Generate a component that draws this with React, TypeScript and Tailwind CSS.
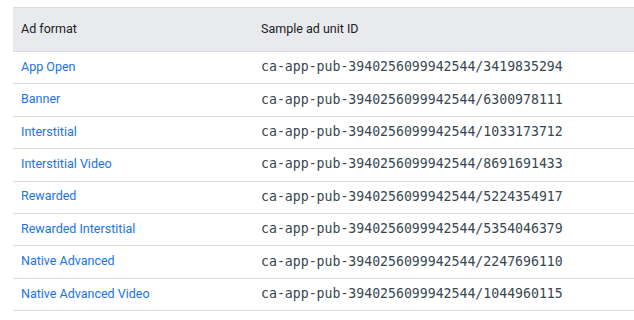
const rows: [string, string][] = [
  ['App Open', 'ca-app-pub-3940256099942544/3419835294'],
  ['Banner', 'ca-app-pub-3940256099942544/6300978111'],
  ['Interstitial', 'ca-app-pub-3940256099942544/1033173712'],
  ['Interstitial Video', 'ca-app-pub-3940256099942544/8691691433'],
  ['Rewarded', 'ca-app-pub-3940256099942544/5224354917'],
  ['Rewarded Interstitial', 'ca-app-pub-3940256099942544/5354046379'],
  ['Native Advanced', 'ca-app-pub-3940256099942544/2247696110'],
  ['Native Advanced Video', 'ca-app-pub-3940256099942544/1044960115'],
];

export default function App() {
  return (
    <div className="w-[634px] h-[320px] overflow-hidden bg-white pt-[7px] pl-[13px] font-['Roboto',sans-serif]">
      <div className="w-[640px] border-t border-[#dadce0]">
        {/* header */}
        <div className="flex h-[44px] items-center bg-[#e8eaed] border-b border-[#dadce0] text-[12.5px] text-[#202124] pb-[1px]">
          <div className="w-[240px] pl-[8px]">Ad format</div>
          <div className="pl-[8px]">Sample ad unit ID</div>
        </div>

        {rows.map(([name, id]) => (
          <div key={name} className="flex h-[32.4px] items-center border-b border-[#dadce0] pb-[1px]">
            <a className="w-[240px] pl-[8px] text-[12.5px] text-[#1a73e8]">{name}</a>
            <code className="pl-[8px] text-[13.2px] font-medium text-[#37474f] font-['DejaVu_Sans_Mono','Liberation_Mono',monospace]">
              {id}
            </code>
          </div>
        ))}
      </div>
    </div>
  );
}
